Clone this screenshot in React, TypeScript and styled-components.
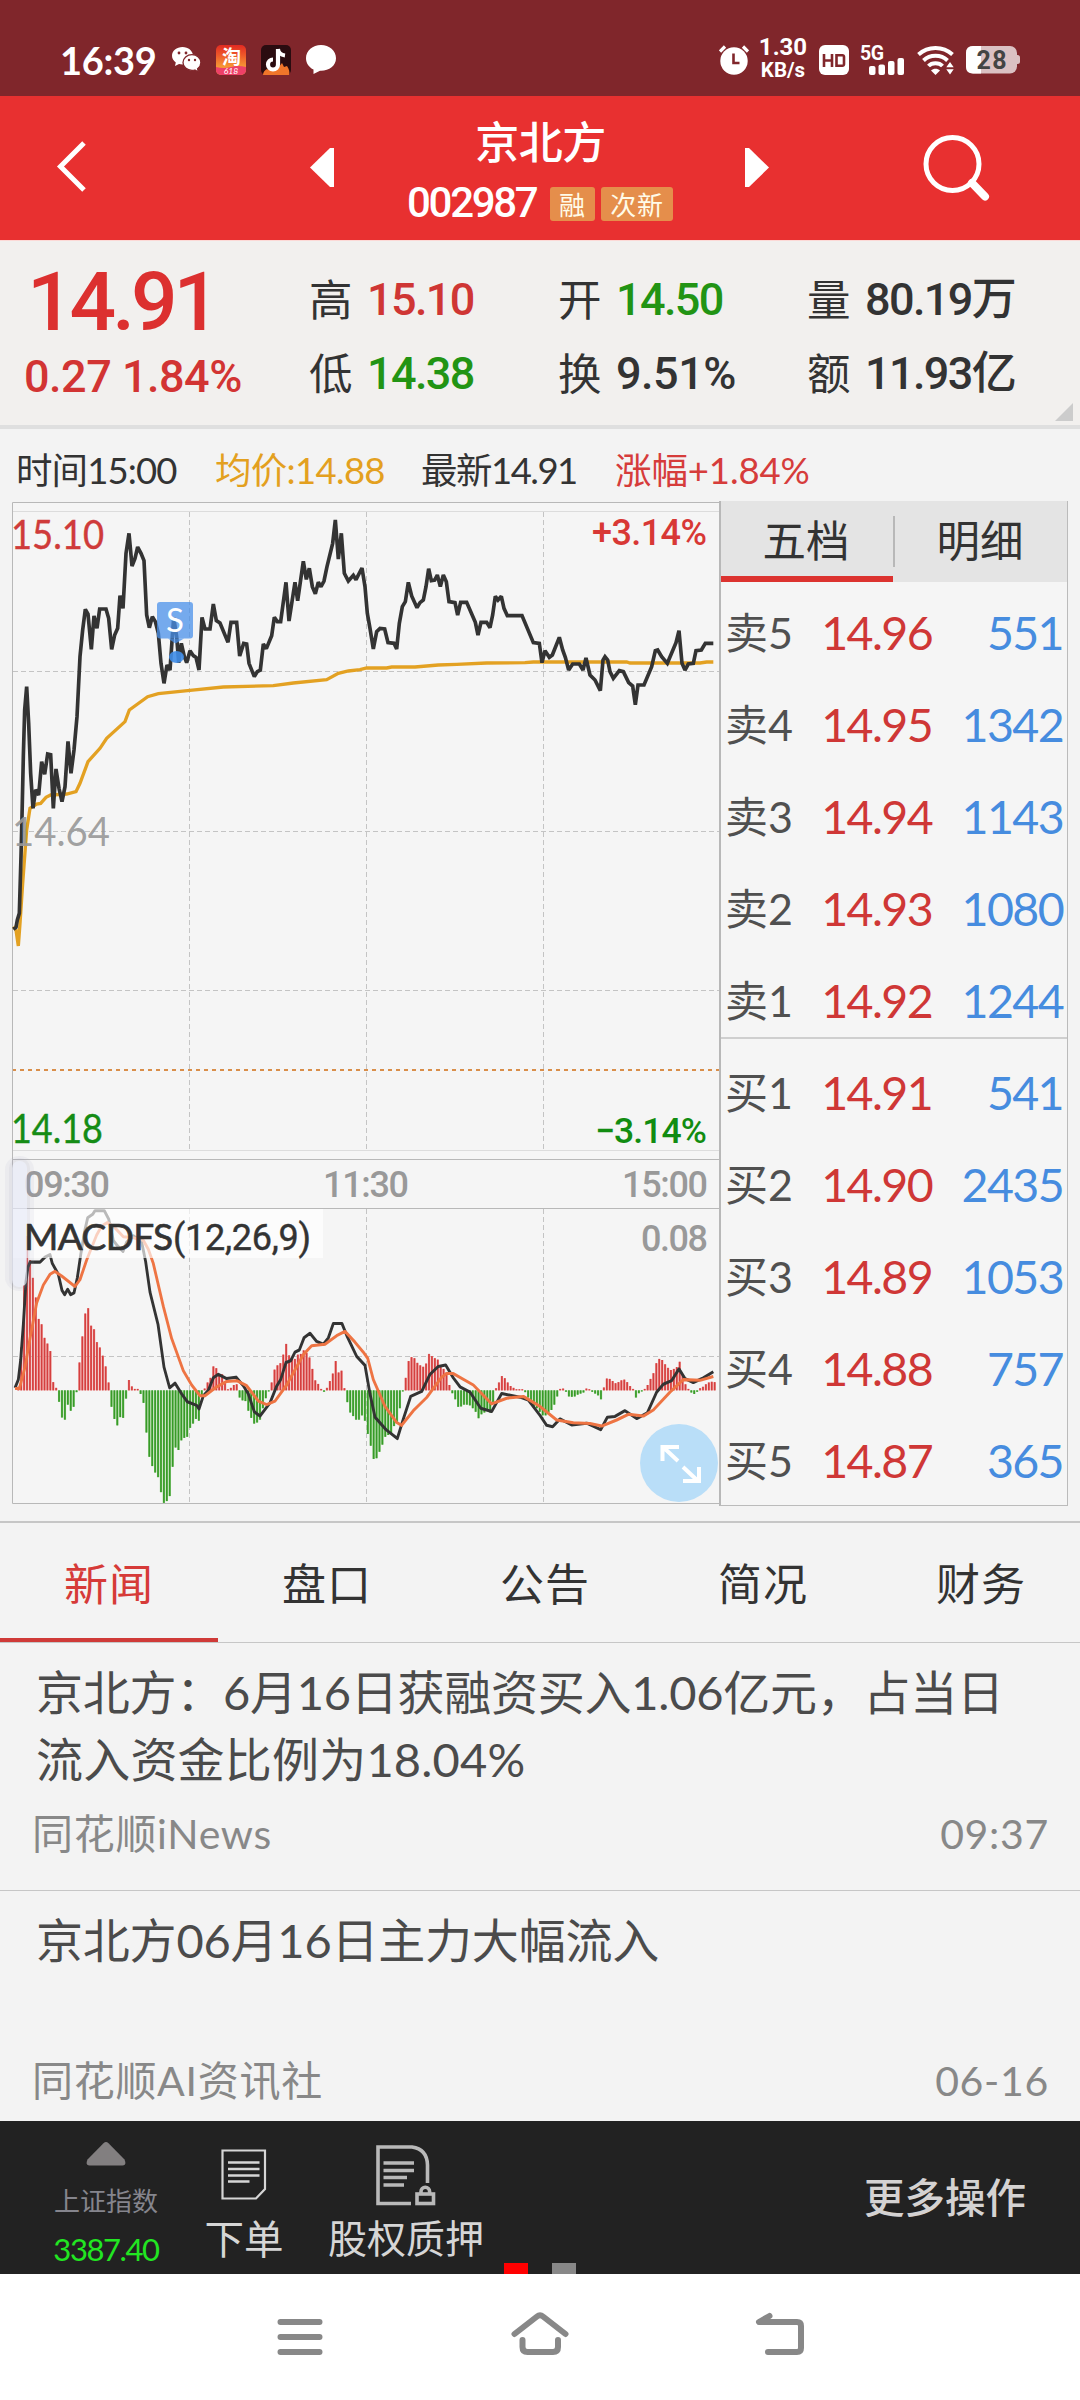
import React from 'react';
import styled, { createGlobalStyle } from 'styled-components';

const GlobalStyle = createGlobalStyle`
  * { box-sizing: border-box; }
  html, body { margin: 0; padding: 0; background: #f3f3f3; }
  body { font-family: Lato, "Noto Sans CJK SC", sans-serif; }
`;

const TEXT = 'Lato, "Noto Sans CJK SC", sans-serif';
const DIN = 'Roboto, "Noto Sans CJK SC", sans-serif';

const Screen = styled.div`
  width: 1080px;
  height: 2400px;
  overflow: hidden;
  display: flex;
  flex-direction: column;
  background: #f3f3f3;
  color: #333;
`;

const T = styled.span<{ $s: number; $c?: string; $ls?: number; $w?: number; $din?: boolean; $mt?: number }>`
  font-family: ${p => (p.$din ? DIN : TEXT)};
  font-size: ${p => p.$s}px;
  color: ${p => p.$c || 'inherit'};
  letter-spacing: ${p => p.$ls || 0}px;
  font-weight: ${p => p.$w || 400};
  margin-top: ${p => p.$mt || 0}px;
  line-height: 1;
  white-space: nowrap;
`;

/* ---------- status bar ---------- */
const StatusBar = styled.div`
  height: 96px;
  flex: none;
  background: #80262b;
  color: #fff;
  display: flex;
  align-items: center;
  padding: 24px 60px 0 60px;
`;
const StatusIcons = styled.div`
  display: flex;
  align-items: center;
  gap: 15px;
  margin-left: 16px;
`;
const StatusRight = styled.div`
  margin-left: auto;
  display: flex;
  align-items: center;
`;
const Speed = styled.div`
  display: flex;
  flex-direction: column;
  align-items: center;
  gap: 1px;
  width: 50px;
  margin: -4px 11px 0 9px;
`;

/* ---------- header ---------- */
const Header = styled.div`
  height: 144px;
  flex: none;
  background: #e83030;
  color: #fff;
  display: grid;
  grid-template-columns: 310px 98px 265px 72px 335px;
  align-items: start;
`;
const HeaderTitle = styled.div`
  display: flex;
  flex-direction: column;
  align-items: center;
  padding-top: 24px;
`;
const CodeLine = styled.div`
  display: flex;
  align-items: center;
  width: 265px;
  gap: 6px;
  margin-top: 16px;
`;
const Code = styled.div`
  width: 136px;
  margin-left: -1px;
  margin-right: 1px;
  padding-top: 2px;
  line-height: 33px;
`;
const Badge = styled.span<{ $w: number }>`
  width: ${p => p.$w}px;
  flex: none;
  height: 34px;
  border-radius: 3px;
  background: #e58e4b;
  color: #fffbe8;
  font-family: "Noto Sans CJK SC", sans-serif;
  font-size: 26px;
  line-height: 33px;
  letter-spacing: 0.8px;
  text-align: center;
`;

/* ---------- quote ---------- */
const Quote = styled.div`
  height: 189px;
  flex: none;
  position: relative;
  background: #f2f0ee;
  border-top: 1px solid #fcd9d6;
  border-bottom: 4px solid #dfdfdf;
  display: grid;
  grid-template-columns: 310px 249px 249px 1fr;
`;
const PriceBlock = styled.div`
  display: flex;
  flex-direction: column;
  padding: 20px 0 0 24px;
  & > :first-child { padding-left: 3px; }
`;
const PairColumn = styled.div`
  display: flex;
  flex-direction: column;
  padding-top: 34px;
`;
const Pair = styled.div`
  display: flex;
  align-items: center;
  height: 48px;
  margin-bottom: 26px;
`;
const PairLabel = styled.span`
  font-family: "Noto Sans CJK SC", sans-serif;
  font-size: 43.5px;
  line-height: 46px;
  height: 48px;
  width: 58px;
  margin-left: -1px;
`;
const Corner = styled.div`
  position: absolute;
  right: 7px;
  bottom: 4px;
  border-left: 18px solid transparent;
  border-bottom: 18px solid #ccc;
`;

const InfoLine = styled.div`
  height: 72px;
  flex: none;
  display: grid;
  grid-template-columns: 199px 206px 194px 1fr;
  align-items: center;
  padding: 10px 0 0 16px;
`;

/* ---------- chart and order book ---------- */
const Market = styled.div`
  height: 1020px;
  flex: none;
  display: flex;
`;
const ChartBox = styled.div`
  width: 719px;
  overflow: hidden;
`;
const Book = styled.div`
  width: 349px;
  height: 1005px;
  background: #f5f5f5;
  border: 1px solid #bbb;
  border-top: none;
  border-left: 2px solid #b8b8b8;
`;
const BookTabs = styled.div`
  height: 81px;
  background: #e4e4e4;
  display: grid;
  grid-template-columns: 172px 1fr;
`;
const BookTab = styled.div<{ $on?: boolean }>`
  display: flex;
  align-items: center;
  justify-content: center;
  padding-top: ${p => (p.$on ? 4 : 0)}px;
  padding-bottom: ${p => (p.$on ? 0 : 2)}px;
  padding-right: ${p => (p.$on ? 2 : 0)}px;
  border-bottom: ${p => (p.$on ? '6px solid #dc3330' : 'none')};
  background: ${p => (p.$on ? 'none' : 'linear-gradient(#b8b8b8, #b8b8b8) 0 15px / 2px 51px no-repeat')};
`;
const Side = styled.div<{ $sell?: boolean }>`
  height: ${p => (p.$sell ? 457 : 466)}px;
  padding-top: ${p => (p.$sell ? 0 : 3)}px;
  border-bottom: ${p => (p.$sell ? '2px solid #cfcfcf' : 'none')};
`;
const Row = styled.div`
  height: 92px;
  display: grid;
  grid-template-columns: 85px 122px 131px;
  align-items: center;
  padding: 9px 0 0 4px;
  & > :not(:first-child) { text-align: right; }
`;

/* ---------- news ---------- */
const Tabs = styled.div`
  height: 122px;
  flex: none;
  border-top: 2px solid #c6c6c6;
  border-bottom: 1px solid #c6c6c6;
  display: grid;
  grid-template-columns: repeat(5, 218px);
  overflow: hidden;
`;
const Tab = styled.div<{ $on?: boolean }>`
  display: flex;
  align-items: center;
  justify-content: center;
  font-family: "Noto Sans CJK SC", sans-serif;
  font-size: 44px;
  letter-spacing: 1px;
  color: ${p => (p.$on ? '#d63a38' : '#333')};
  padding-top: ${p => (p.$on ? 2 : 0)}px;
  padding-bottom: ${p => (p.$on ? 0 : 2)}px;
  border-bottom: ${p => (p.$on ? '4px solid #cf3a37' : 'none')};
`;
const NewsItem = styled.div<{ $last?: boolean }>`
  height: ${p => (p.$last ? 230 : 248)}px;
  flex: none;
  display: flex;
  flex-direction: column;
  justify-content: space-between;
  padding: 16px 31px ${p => (p.$last ? 13 : 29)}px 32px;
  border-bottom: ${p => (p.$last ? 'none' : '1px solid #c6c6c6')};
`;
const NewsTitle = styled.div`
  font-size: 47px;
  line-height: 67px;
  color: #4b4b4b;
  padding-left: 4px;
`;
const TitleLine = styled.div<{ $ls: number }>`
  letter-spacing: ${p => p.$ls}px;
  white-space: nowrap;
`;
const NewsMeta = styled.div`
  display: flex;
  justify-content: space-between;
  font-size: 41px;
  line-height: 54px;
  letter-spacing: 0.7px;
  color: #888;
`;

/* ---------- bottom ---------- */
const Toolbar = styled.div`
  height: 153px;
  flex: none;
  background: #222;
  color: #d6d6d6;
  position: relative;
  display: grid;
  grid-template-columns: 184px 120px 204px 1fr;
`;
const ToolItem = styled.div<{ $pt: number; $pl?: number }>`
  display: flex;
  flex-direction: column;
  align-items: center;
  padding-top: ${p => p.$pt}px;
  padding-left: ${p => p.$pl || 0}px;
`;
const MoreBox = styled.div`
  display: flex;
  align-items: center;
  justify-content: flex-end;
  padding: 1px 54px 0 0;
`;
const Dot = styled.i<{ $x: number; $c: string }>`
  position: absolute;
  left: ${p => p.$x}px;
  bottom: 0;
  width: 24px;
  height: 11px;
  background: ${p => p.$c};
`;
const NavBar = styled.div`
  height: 126px;
  flex: none;
  background: #fff;
  display: flex;
  justify-content: center;
`;

/* ---------- chart data ---------- */
const price =
  '40,1318 48,1312 52,1290 58,1270 63,1100 66,980 70,800 74,660 80,590 86,700 92,850 99,955 107,899 116,915 125,815 134,853 143,792 152,794 160,955 168,837 177,895 186,935 195,890 204,754 213,850 222,780 231,680 240,500 248,420 256,358 264,372 274,478 282,378 291,415 299,357 318,357 326,385 335,478 344,435 353,415 360,317 369,355 378,190 387,130 396,228 405,205 413,171 423,190 432,212 440,375 448,413 457,380 466,395 475,430 483,520 492,580 501,525 510,540 521,382 530,440 536,518 544,460 553,500 560,518 570,482 580,497 588,502 597,540 606,382 615,417 630,417 640,342 649,392 660,399 684,457 693,397 710,397 719,498 731,460 740,462 747,520 763,560 772,545 781,540 790,462 799,476 815,437 823,382 832,395 842,395 858,277 867,393 885,277 893,332 910,214 919,268 928,235 937,290 946,311 955,277 963,290 972,273 981,230 998,160 1006,90 1015,207 1024,130 1033,250 1045,273 1060,256 1068,269 1086,234 1095,290 1102,370 1110,415 1120,477 1130,425 1140,415 1154,417 1164,458 1182,460 1190,477 1198,400 1207,350 1216,335 1225,277 1235,318 1251,353 1260,338 1270,330 1278,290 1286,236 1294,272 1304,270 1312,255 1321,290 1330,255 1339,275 1347,335 1365,338 1373,375 1382,337 1400,337 1426,397 1434,435 1443,397 1460,397 1470,413 1478,375 1486,319 1494,330 1504,319 1512,355 1522,377 1566,377 1600,458 1618,460 1626,518 1635,482 1648,502 1657,495 1678,442 1688,480 1696,502 1706,540 1718,522 1738,522 1749,540 1758,504 1770,555 1785,570 1801,602 1809,510 1815,500 1823,510 1830,545 1840,565 1858,542 1870,545 1886,578 1898,588 1906,644 1914,585 1932,585 1955,530 1966,482 1973,480 1985,500 2002,520 2028,458 2037,422 2046,520 2055,540 2065,522 2080,520 2088,482 2104,480 2116,460 2140,460';
const average =
  '40,1310 48,1320 55,1368 60,1300 68,1180 80,1020 90,955 110,942 122,940 138,922 152,915 200,912 228,905 240,880 264,815 300,775 320,745 375,695 388,660 443,620 475,611 570,601 670,591 820,587 880,579 980,569 1015,550 1045,543 1080,539 1100,534 1160,534 1175,531 1245,531 1315,525 1370,523 1460,519 1575,518 1600,516 1880,516 1890,519 2100,519 2120,516 2140,516';
const dif =
  '45,1198 55,1175 62,1120 70,1020 78,900 84,860 90,846 120,846 135,832 150,825 157,850 175,880 186,925 194,937 203,922 212,937 222,932 232,890 243,820 255,755 263,722 278,712 285,702 313,702 326,725 340,785 352,800 369,816 380,790 400,772 425,790 437,845 450,930 474,1020 492,1140 509,1198 525,1185 545,1215 562,1237 590,1247 597,1257 610,1220 625,1205 640,1170 655,1160 680,1172 708,1168 730,1192 745,1215 763,1265 780,1277 810,1240 830,1193 842,1175 858,1127 872,1122 885,1098 898,1092 912,1058 930,1045 950,1068 970,1076 985,1058 1000,1018 1026,1018 1042,1055 1070,1110 1095,1135 1110,1215 1125,1280 1158,1315 1192,1340 1210,1285 1232,1222 1265,1208 1290,1160 1315,1138 1337,1134 1360,1170 1380,1195 1410,1210 1442,1255 1475,1264 1505,1214 1560,1224 1585,1232 1620,1275 1640,1303 1658,1307 1680,1285 1715,1302 1760,1297 1802,1315 1822,1280 1845,1278 1875,1262 1910,1284 1942,1268 1970,1210 1990,1188 2015,1178 2037,1145 2055,1172 2080,1183 2110,1170 2140,1153';
const dea =
  '45,1200 58,1200 75,1140 90,1060 110,960 130,910 150,880 165,872 185,885 225,914 240,895 260,840 290,770 305,745 322,735 345,750 370,775 400,778 430,785 445,810 460,850 490,970 515,1060 550,1150 575,1190 600,1220 615,1220 650,1195 680,1180 710,1178 740,1192 775,1235 800,1245 825,1235 860,1190 910,1105 935,1080 975,1076 1010,1052 1035,1040 1065,1070 1090,1098 1103,1115 1120,1175 1155,1250 1190,1295 1205,1303 1240,1262 1280,1225 1325,1168 1340,1158 1360,1158 1420,1190 1475,1243 1520,1227 1570,1222 1620,1250 1670,1288 1720,1296 1770,1298 1805,1305 1850,1288 1885,1272 1930,1277 1960,1260 2010,1210 2050,1175 2100,1177 2140,1166';
const barsAm = [
  10, 120, 295, 432, 365, 315, 260, 200, 185, 147, 131, 110, 23, 7, -32, -76, -82, -40, -57, -46, -5, 78, 151, 215, 230, 181, 171, 135, 120, 97, 67, 22, -46, -80, -98, -75, -77, -23, 29, 11, 4, 4, -10, -35, -118, -186, -212, -230, -243, -285, -315, -310, -296, -214, -160, -167, -140, -133, -130, -105, -93, -80, -85, -15, 5, 22, 35, 67, 62, 45, 45, 25, 3, 7, 15, 17, -20, -28, -30, -57, -77, -93, -90, -82, -50, -22, -3, 22, 58, 70, 76, 100, 130, 98, 90, 88, 100, 102, 112, 105, 92, 60, 28, 18, 4, -4, 7, 26, 47, 82, 50, 55, 6, -33, -62, -72, -82, -82,
];
const barsPm = [
  -70, -85, -122, -155, -192, -190, -172, -152, -130, -125, -122, -100, -88, -50, -3, 35, 82, 93, 90, 77, 70, 66, 75, 102, 96, 90, 86, 65, 60, 50, 15, -8, -25, -46, -45, -40, -40, -42, -50, -60, -78, -67, -62, -58, -62, -35, 6, 22, 40, 34, 22, 12, 7, 3, 3, 3, -5, -20, -35, -45, -50, -60, -70, -70, -62, -55, -40, -17, 4, 5, -4, -17, -18, -17, -12, -9, -6, 5, 3, -4, -9, -14, -25, 8, 33, 32, 26, 20, 23, 28, 30, 23, 12, 4, -20, -8, -3, 4, 15, 32, 48, 76, 88, 85, 73, 63, 57, 60, 65, 80, 45, 17, 4, -6, -10, -4, 6, 10, 17, 22, 24, 23,
];
const spread = (values: number[], from: number, to: number) =>
  values.map((h, i) => ({ x: from + ((to - from) * i) / (values.length - 1), h }));
const bars = [...spread(barsAm, 55, 1077), ...spread(barsPm, 1086, 2144)];

const ChartText = styled.text<{ $s: number; $c: string; $din?: boolean; $w?: number }>`
  font-family: ${p => (p.$din ? DIN : TEXT)};
  font-size: ${p => p.$s}px;
  font-weight: ${p => p.$w || 400};
  fill: ${p => p.$c};
`;
const ChartSvg = styled.svg`
  display: block;
`;

const Chart = () => (
  <ChartSvg width="720" height="1006" viewBox="0 501 720 1006">
    <rect x="12" y="502" width="708" height="1002" fill="#f5f5f5" />
    <g stroke="#c4c4c4" strokeWidth="1" strokeDasharray="5 3" fill="none">
      <path d="M189.5 512V1150M366.5 512V1150M543.5 512V1150" />
      <path d="M189.5 1209V1503M366.5 1209V1503M543.5 1209V1503" />
      <path d="M13 671.5H719M13 831.5H719M13 990.5H719M13 1356.5H719" />
    </g>
    <path d="M13 511.5H719M13 1150.5H719" stroke="#dcdcdc" />
    <path d="M12 1070H720" stroke="#d98e4a" strokeWidth="2" strokeDasharray="4 4" />
    <path d="M720 502.5H12.5V1159.5H720M12.5 1208.5H720M12.5 1208V1503.5H720M12.5 1159V1208" stroke="#b8b8b8" fill="none" />
    <g transform="translate(0 490) scale(.33333)" fill="none" strokeLinejoin="miter" strokeMiterlimit="2">
      <polyline points={average} stroke="#e3a122" strokeWidth="10" />
      <polyline points={price} stroke="#333" strokeWidth="11" />
    </g>
    <ChartText $s={40} $c="#999" fillOpacity=".93" x="12" y="846" textLength="98" lengthAdjust="spacingAndGlyphs">14.64</ChartText>
    <ChartText $s={40.5} $c="#cf3b3a" x="11" y="549" textLength="93" lengthAdjust="spacingAndGlyphs" stroke="#cf3b3a" strokeWidth=".4">15.10</ChartText>
    <ChartText $s={40.5} $c="#158c15" x="11" y="1142.5" textLength="92" lengthAdjust="spacingAndGlyphs" stroke="#158c15" strokeWidth=".4">14.18</ChartText>
    <ChartText $din $w={500} $s={36} $c="#d83835" x="592" y="545" textLength="115">+3.14%</ChartText>
    <ChartText $din $w={500} $s={35.5} $c="#118c11" x="595" y="1142.5" textLength="112">−3.14%</ChartText>
    <g>
      <rect x="157" y="602" width="36" height="36.500" rx="3" fill="#4a90ea" opacity=".75" />
      <path d="M168 638.500h16l-8.500 5z" fill="#4a90ea" opacity=".75" />
      <ellipse cx="176.500" cy="657" rx="7.500" ry="6" fill="#3f8de8" opacity=".9" />
      <ChartText $s={33} $c="#fff" x="175" y="632" textAnchor="middle">S</ChartText>
    </g>
    <ChartText $din $w={500} $s={36} $c="#999" x="24" y="1197" textLength="86">09:30</ChartText>
    <ChartText $din $w={500} $s={36} $c="#999" x="323" y="1197" textLength="86">11:30</ChartText>
    <ChartText $din $w={500} $s={36} $c="#999" x="622" y="1197" textLength="86">15:00</ChartText>
    <ChartText $din $w={500} $s={36} $c="#999" x="641" y="1250.500" textLength="67">0.08</ChartText>
    <g transform="translate(0 960) scale(.33333 .35714)" fill="none" strokeLinejoin="round">
      {bars.map((b, i) => (
        <rect key={i} x={b.x - 3.4} width="6.800" y={b.h > 0 ? 1205 - b.h : 1205} height={Math.abs(b.h)} fill={b.h > 0 ? '#ee8683' : '#7fc56f'} />
      ))}
      {bars.map((b, i) => (
        <rect key={i} x={b.x - 2.4} width="4.600" y={b.h > 0 ? 1205 - b.h : 1205} height={Math.abs(b.h)} fill={b.h > 0 ? '#d43f3f' : '#379a28'} />
      ))}
      <polyline points={dif} stroke="#333" strokeWidth="8.500" />
      <polyline points={dea} stroke="#ee7443" strokeWidth="8.500" />
    </g>
    <rect x="13" y="1209" width="310" height="49" fill="#fff" opacity=".66" />
    <rect x="5" y="1156" width="29" height="135" rx="14" fill="#9aa0b8" opacity=".09" />
    <rect x="9" y="1158" width="21" height="131" rx="10" fill="#9aa0b8" opacity=".1" />
    <rect x="12" y="1161" width="15" height="126" rx="7" fill="#f0f3ff" opacity=".6" />
    <ChartText $s={37} $c="#333" x="24" y="1250" textLength="149" stroke="#333" strokeWidth=".7">MACDFS</ChartText>
    <ChartText $din $s={36} $c="#333" x="173" y="1250" textLength="138" stroke="#333" strokeWidth=".4">(12,26,9)</ChartText>
    <circle cx="679" cy="1463" r="39" fill="#b9def8" />
    <path d="M662.500 1461V1447H679M663 1447L678 1461M699 1467V1481H683M698 1481L683 1467" stroke="#fff" strokeWidth="4" fill="none" />
  </ChartSvg>
);

const WeChat = () => (
  <svg width="29" height="26" viewBox="0 0 29 26">
    <path d="M10.500 0C4.700 0 0 3.900 0 8.800c0 2.700 1.500 5.100 3.800 6.700L3 19l4-2c1.100.3 2.300.5 3.500.5C16.300 17.500 21 13.600 21 8.800S16.300 0 10.500 0z" fill="#fff" />
    <path d="M20 7.600c-5 0-9 3.500-9 7.900s4 7.900 9 7.900c1 0 2-.1 2.900-.4l3.500 2-.8-3.200c2-1.500 3.300-3.700 3.300-6.300 0-4.400-4-7.900-8.900-7.900z" fill="#fff" stroke="#80262b" strokeWidth="1.300" />
    <g fill="#80262b"><circle cx="7" cy="6" r="1.400" /><circle cx="14" cy="6" r="1.400" /><circle cx="17" cy="13" r="1.200" /><circle cx="23" cy="13" r="1.200" /></g>
  </svg>
);
const Taobao = () => (
  <svg width="30" height="30" viewBox="0 0 30 30" overflow="visible">
    <defs>
      <linearGradient id="tao" x1="0" y1="0" x2="0" y2="1">
        <stop offset="0" stopColor="#e22a22" />
        <stop offset=".35" stopColor="#ee5a2a" />
        <stop offset=".74" stopColor="#f79a35" />
      </linearGradient>
    </defs>
    <rect width="30" height="30" rx="5" fill="url(#tao)" />
    <path d="M0 22Q8 24 15 22T30 22V25a5 5 0 0 1-5 5H5a5 5 0 0 1-5-5z" fill="#ee4068" />
    <text x="15.500" y="18.500" textAnchor="middle" fill="#fff" fontFamily="Noto Sans CJK SC, sans-serif" fontWeight="700" fontSize="19">淘</text>
    <text x="15" y="29" textAnchor="middle" fill="#fff" fontFamily="Lato, sans-serif" fontStyle="italic" fontSize="8.500">618</text>
  </svg>
);
const TikTok = () => (
  <svg width="30" height="30" viewBox="0 0 30 30">
    <rect width="30" height="30" rx="5" fill="#2a0c10" />
    <path d="M2 30c0-3 2-5 4-6 1 1 2 1 3-1l3 2 5-2 4-5 2 4 3-1c2 3 3 6 2 9z" fill="#f0752a" />
    <path d="M17 4v15.500a5 5 0 1 1-5-5" stroke="#fff" strokeWidth="4.200" fill="none" />
    <path d="M17 4c.5 3.500 3 6 7 6.500" stroke="#fff" strokeWidth="3.800" fill="none" />
  </svg>
);
const Bubble = () => (
  <svg width="30" height="30" viewBox="0 0 30 30">
    <path d="M15 0C6.700 0 0 5.700 0 13.200c0 5 3 9.200 7.500 11.300V29l6.500-3.300h1c8.300 0 15-5 15-12.500S23.300 0 15 0z" fill="#fff" />
  </svg>
);
const Alarm = () => (
  <svg width="30" height="30" viewBox="0 0 30 30">
    <circle cx="15" cy="16" r="13.700" fill="#fff" />
    <path d="M14.500 8.500V18H20.500" stroke="#80262b" strokeWidth="2.600" fill="none" />
    <path d="M1 6.500L6 1.500M29 6.500L24 1.500" stroke="#fff" strokeWidth="3.200" />
  </svg>
);
const Hd = () => (
  <svg width="30" height="30" viewBox="0 0 30 30">
    <rect width="30" height="30" rx="6" fill="#fff" />
    <path d="M5 9v13M13 9v13M5 15.500h8M17.500 10.300h6a1.500 1.500 0 0 1 1.500 1.500v7.400a1.500 1.500 0 0 1-1.500 1.500h-6z" stroke="#80262b" strokeWidth="2.600" fill="none" />
  </svg>
);
const Signal = () => (
  <svg width="46" height="32" viewBox="0 0 46 32" overflow="visible">
    <text x="0" y="15.500" fill="#fff" fontFamily="Roboto, sans-serif" fontWeight="700" fontSize="19.500" textLength="24">5G</text>
    <g fill="#fff"><rect x="9" y="22" width="6.500" height="9" rx="2" /><rect x="18.500" y="20.500" width="6.500" height="10.500" rx="2" /><rect x="28" y="17" width="6.500" height="14" rx="2" /><rect x="37.500" y="14" width="6.500" height="17" rx="2" /></g>
  </svg>
);
const Wifi = () => (
  <svg width="38" height="30" viewBox="0 0 38 30">
    <g fill="none" stroke="#fff" strokeWidth="4">
      <path d="M1.500 9.500C11 .8 26 .8 35.500 9.500" />
      <path d="M6.500 15.500C13 9.300 24 9.300 30.500 15.500" />
      <path d="M11.500 21C15 17.300 22 17.300 25.500 21" />
    </g>
    <path d="M18.500 30l-4.500-4.500c2.500-2.200 6.500-2.200 9 0z" fill="#fff" />
    <path d="M33 17l3.700 5.200h-7.400zM33 29.500l3.700-5.200h-7.400z" fill="#fff" />
  </svg>
);
const Battery = () => (
  <svg width="54" height="28" viewBox="0 0 54 28" overflow="visible">
    <path d="M50 9h1.500q2.500 0 2.500 2.500v4q0 2.500-2.500 2.500H50z" fill="#dbc1c3" />
    <rect width="51" height="27.500" rx="7" fill="#dbc1c3" />
    <path d="M15 0H7Q0 0 0 7v13.500q0 7 7 7h8z" fill="#fff" />
    <text x="10.500" y="22.500" fill="#444" fontFamily="Roboto, sans-serif" fontWeight="700" fontSize="25" textLength="30">28</text>
  </svg>
);
const StatusGroup = styled.div`
  display: flex;
  align-items: center;
  gap: 11px;
`;

const stats = [
  [['高', '15.10', '#cf3634'], ['低', '14.38', '#229414']],
  [['开', '14.50', '#229414'], ['换', '9.51%', '#333']],
  [['量', '80.19万', '#333'], ['额', '11.93亿', '#333']],
];
const sells = [['卖5', '14.96', '551'], ['卖4', '14.95', '1342'], ['卖3', '14.94', '1143'], ['卖2', '14.93', '1080'], ['卖1', '14.92', '1244']];
const buys = [['买1', '14.91', '541'], ['买2', '14.90', '2435'], ['买3', '14.89', '1053'], ['买4', '14.88', '757'], ['买5', '14.87', '365']];

const BookRows = ({ rows }: { rows: string[][] }) => (
  <>
    {rows.map(([label, p, v]) => (
      <Row key={label}>
        <T $s={43} $c="#505050">{label}</T>
        <T $s={46.5} $c="#cf3736" $ls={-1.6}>{p}</T>
        <T $s={46.5} $c="#468cdf" $ls={-1.6}>{v}</T>
      </Row>
    ))}
  </>
);

export default function App() {
  return (
    <Screen>
      <GlobalStyle />
      <StatusBar>
        <T $s={38} $w={700} $ls={-0.3}>16:39</T>
        <StatusIcons>
          <WeChat />
          <Taobao />
          <TikTok />
          <Bubble />
        </StatusIcons>
        <StatusRight>
          <Alarm />
          <Speed>
            <T $din $s={24} $w={700}>1.30</T>
            <T $din $s={20.500} $w={700}>KB/s</T>
          </Speed>
          <StatusGroup>
            <Hd />
            <Signal />
            <Wifi />
            <Battery />
          </StatusGroup>
        </StatusRight>
      </StatusBar>

      <Header>
        <svg width="310" height="144" viewBox="0 0 310 144">
          <path d="M84 47L60.500 70.500L84 94" stroke="#fff" strokeWidth="5" fill="none" />
        </svg>
        <svg width="98" height="144" viewBox="310 96 98 144"><path d="M334 148V187H330L310 167.500L330 148z" fill="#fff" /></svg>
        <HeaderTitle>
          <T $s={44} $w={500} $ls={-0.5}>京北方</T>
          <CodeLine>
            <Code><T $din $s={42} $w={500} $ls={-2.3}>002987</T></Code>
            <Badge $w={45}>融</Badge>
            <Badge $w={72}>次新</Badge>
          </CodeLine>
        </HeaderTitle>
        <svg width="72" height="144" viewBox="673 96 72 144" overflow="visible"><path d="M745 148V187H749L769 167.500L749 148z" fill="#fff" /></svg>
        <svg width="335" height="144" viewBox="745 96 335 144">
          <circle cx="952.500" cy="164" r="26.500" stroke="#fff" strokeWidth="5" fill="none" />
          <path d="M972 183L985 196.500" stroke="#fff" strokeWidth="8" strokeLinecap="round" />
        </svg>
      </Header>

      <Quote>
        <PriceBlock>
          <T $din $s={82} $w={500} $c="#dc302f" $ls={-4}>14.91</T>
          <T $din $s={45} $w={500} $c="#d23433" $ls={-0.5} $mt={11}>0.27 1.84%</T>
        </PriceBlock>
        {stats.map((col, i) => (
          <PairColumn key={i}>
            {col.map(([label, value, color]) => (
              <Pair key={label}>
                <PairLabel>{label}</PairLabel>
                <T $din $s={45} $w={500} $c={color} $ls={value.endsWith('%') ? -0.5 : -1.6}>{value}</T>
              </Pair>
            ))}
          </PairColumn>
        ))}
        <Corner />
      </Quote>

      <InfoLine>
        <T $s={36.500} $ls={-0.9}>时间15:00</T>
        <T $s={36.500} $ls={-0.7} $c="#e3a01f">均价:14.88</T>
        <T $s={36.500} $ls={-1.5}>最新14.91</T>
        <T $s={36.500} $ls={-0.1} $c="#d63c3b">涨幅+1.84%</T>
      </InfoLine>

      <Market>
        <ChartBox><Chart /></ChartBox>
        <Book>
          <BookTabs>
            <BookTab $on><T $s={43.500}>五档</T></BookTab>
            <BookTab><T $s={43.500}>明细</T></BookTab>
          </BookTabs>
          <Side $sell><BookRows rows={sells} /></Side>
          <Side><BookRows rows={buys} /></Side>
        </Book>
      </Market>

      <Tabs>
        <Tab $on>新闻</Tab>
        <Tab>盘口</Tab>
        <Tab>公告</Tab>
        <Tab>简况</Tab>
        <Tab>财务</Tab>
      </Tabs>
      <NewsItem>
        <NewsTitle>
          <TitleLine $ls={-0.25}>京北方：6月16日获融资买入1.06亿元，占当日</TitleLine>
          <TitleLine $ls={0.2}>流入资金比例为18.04%</TitleLine>
        </NewsTitle>
        <NewsMeta><span>同花顺iNews</span><span>09:37</span></NewsMeta>
      </NewsItem>
      <NewsItem $last>
        <NewsTitle><TitleLine $ls={-0.2}>京北方06月16日主力大幅流入</TitleLine></NewsTitle>
        <NewsMeta><span>同花顺AI资讯社</span><span>06-16</span></NewsMeta>
      </NewsItem>

      <Toolbar>
        <ToolItem $pt={20} $pl={28}>
          <svg width="40" height="25" viewBox="0 0 40 25"><path d="M17.500 2.200q2.500-2.500 5 0L38.500 18.500q2.500 6-2 6h-33q-4.500 0-2-6z" fill="#827f80" /></svg>
          <T $s={26} $c="#85858d" $mt={22}>上证指数</T>
          <T $s={31} $c="#22e622" $ls={-1.4} $mt={20}>3387.40</T>
        </ToolItem>
        <ToolItem $pt={28}>
          <svg width="46" height="52" viewBox="0 0 46 52" fill="none" stroke="#d6d6d6" strokeWidth="2.200">
            <path d="M1.500 1.500H44V40L35 49.500H1.500z" />
            <path d="M7 13.500H38.500M7 20H38.500M7 26.500H38.500M7 32.500H28.500" strokeWidth="2.600" />
          </svg>
          <T $s={39.500} $mt={18}>下单</T>
        </ToolItem>
        <ToolItem $pt={24}>
          <svg width="60" height="62" viewBox="0 0 60 62" fill="none" stroke="#b9b9b9" strokeWidth="3.600">
            <path d="M35 58.500H2V2H36Q51 4 51.500 20V38" />
            <path d="M7.500 18H38M7.500 25.500H38M7.500 32.500H31M7.500 40H28" />
            <rect x="41" y="49" width="16.500" height="9.500" />
            <path d="M45 48V46.500a4.300 4.300 0 0 1 8.600 0V48" />
          </svg>
          <T $s={39} $mt={12}>股权质押</T>
        </ToolItem>
        <MoreBox><T $s={40.500} $w={500} $c="#d4d2d2">更多操作</T></MoreBox>
        <Dot $x={504} $c="#f00" />
        <Dot $x={552} $c="#888" />
      </Toolbar>

      <NavBar>
        <svg width="560" height="126" viewBox="260 2274 560 126" fill="none" stroke="#888" strokeWidth="6" strokeLinecap="round" strokeLinejoin="round">
          <path d="M280.500 2322H319.500M280.500 2337H319.500M280.500 2352H319.500" />
          <path d="M514.500 2334L537 2316.500Q540 2314 543 2316.500L565.500 2334M522.500 2340V2347Q522.500 2352 527.500 2352H553Q558 2352 558 2347V2340" />
          <path d="M769.500 2316L759 2322H797Q801 2322 801 2326V2348Q801 2352 797 2352H768" />
        </svg>
      </NavBar>
    </Screen>
  );
}
